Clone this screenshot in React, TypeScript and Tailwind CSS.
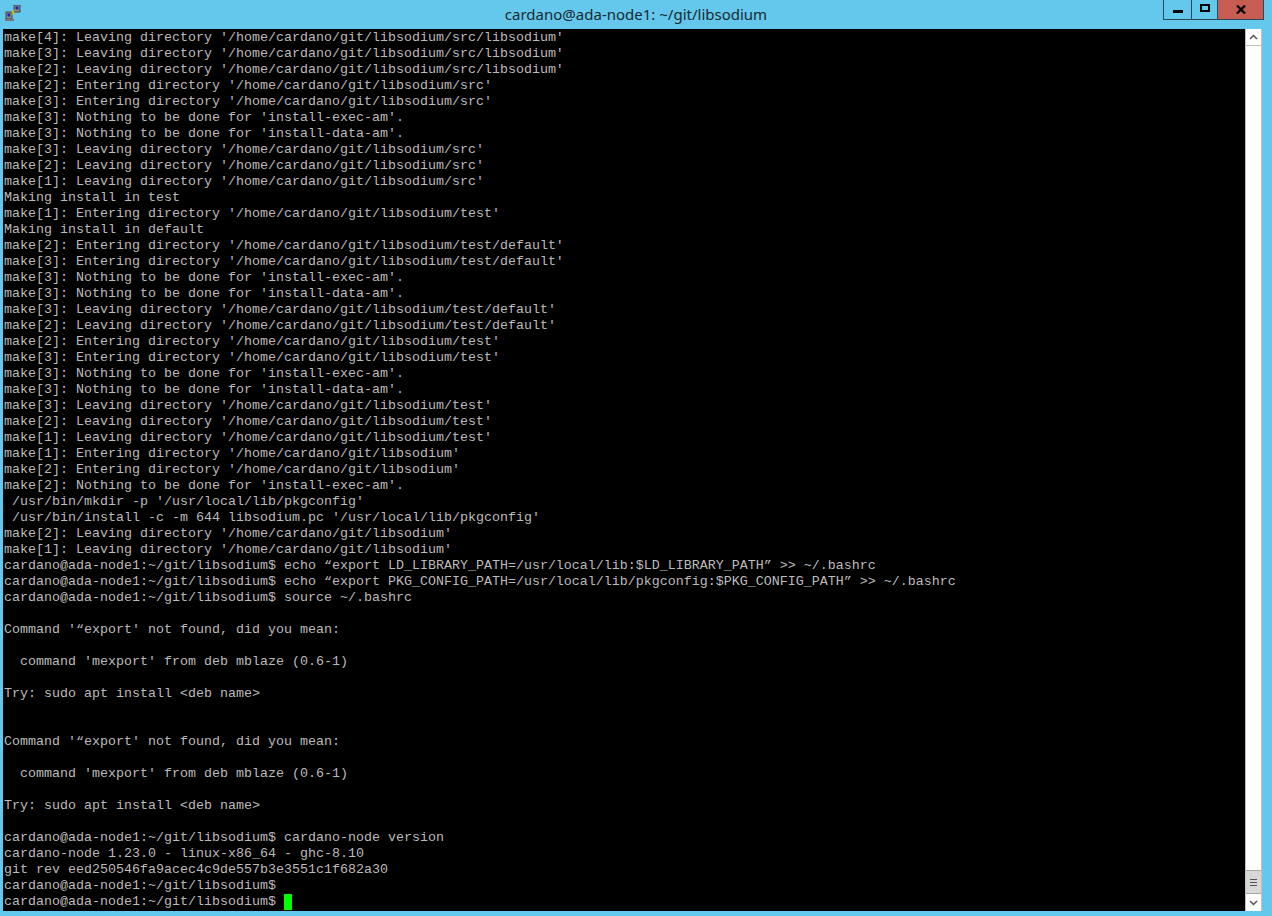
const lines = [
  "make[4]: Leaving directory '/home/cardano/git/libsodium/src/libsodium'",
  "make[3]: Leaving directory '/home/cardano/git/libsodium/src/libsodium'",
  "make[2]: Leaving directory '/home/cardano/git/libsodium/src/libsodium'",
  "make[2]: Entering directory '/home/cardano/git/libsodium/src'",
  "make[3]: Entering directory '/home/cardano/git/libsodium/src'",
  "make[3]: Nothing to be done for 'install-exec-am'.",
  "make[3]: Nothing to be done for 'install-data-am'.",
  "make[3]: Leaving directory '/home/cardano/git/libsodium/src'",
  "make[2]: Leaving directory '/home/cardano/git/libsodium/src'",
  "make[1]: Leaving directory '/home/cardano/git/libsodium/src'",
  "Making install in test",
  "make[1]: Entering directory '/home/cardano/git/libsodium/test'",
  "Making install in default",
  "make[2]: Entering directory '/home/cardano/git/libsodium/test/default'",
  "make[3]: Entering directory '/home/cardano/git/libsodium/test/default'",
  "make[3]: Nothing to be done for 'install-exec-am'.",
  "make[3]: Nothing to be done for 'install-data-am'.",
  "make[3]: Leaving directory '/home/cardano/git/libsodium/test/default'",
  "make[2]: Leaving directory '/home/cardano/git/libsodium/test/default'",
  "make[2]: Entering directory '/home/cardano/git/libsodium/test'",
  "make[3]: Entering directory '/home/cardano/git/libsodium/test'",
  "make[3]: Nothing to be done for 'install-exec-am'.",
  "make[3]: Nothing to be done for 'install-data-am'.",
  "make[3]: Leaving directory '/home/cardano/git/libsodium/test'",
  "make[2]: Leaving directory '/home/cardano/git/libsodium/test'",
  "make[1]: Leaving directory '/home/cardano/git/libsodium/test'",
  "make[1]: Entering directory '/home/cardano/git/libsodium'",
  "make[2]: Entering directory '/home/cardano/git/libsodium'",
  "make[2]: Nothing to be done for 'install-exec-am'.",
  " /usr/bin/mkdir -p '/usr/local/lib/pkgconfig'",
  " /usr/bin/install -c -m 644 libsodium.pc '/usr/local/lib/pkgconfig'",
  "make[2]: Leaving directory '/home/cardano/git/libsodium'",
  "make[1]: Leaving directory '/home/cardano/git/libsodium'",
  "cardano@ada-node1:~/git/libsodium$ echo “export LD_LIBRARY_PATH=/usr/local/lib:$LD_LIBRARY_PATH” >> ~/.bashrc",
  "cardano@ada-node1:~/git/libsodium$ echo “export PKG_CONFIG_PATH=/usr/local/lib/pkgconfig:$PKG_CONFIG_PATH” >> ~/.bashrc",
  "cardano@ada-node1:~/git/libsodium$ source ~/.bashrc",
  "",
  "Command '“export' not found, did you mean:",
  "",
  "  command 'mexport' from deb mblaze (0.6-1)",
  "",
  "Try: sudo apt install <deb name>",
  "",
  "",
  "Command '“export' not found, did you mean:",
  "",
  "  command 'mexport' from deb mblaze (0.6-1)",
  "",
  "Try: sudo apt install <deb name>",
  "",
  "cardano@ada-node1:~/git/libsodium$ cardano-node version",
  "cardano-node 1.23.0 - linux-x86_64 - ghc-8.10",
  "git rev eed250546fa9acec4c9de557b3e3551c1f682a30",
  "cardano@ada-node1:~/git/libsodium$",
];

export default function App() {
  return (
    <div className="w-[1272px] h-[916px] bg-[#63c8eb] flex flex-col overflow-hidden">
      <div className="h-[29px] shrink-0 relative flex items-start justify-center">
        <svg className="absolute left-[5px] top-[5px]" width="16" height="16" viewBox="0 0 16 16">
          <rect x="9" y="0" width="6" height="7" fill="#8a8a9a" stroke="#333" strokeWidth="0.8" />
          <rect x="10.5" y="1.5" width="3" height="3" fill="#1a2aa0" />
          <rect x="1" y="7" width="6" height="7" fill="#8a8a9a" stroke="#333" strokeWidth="0.8" />
          <rect x="2.5" y="8.5" width="3" height="3" fill="#1a2aa0" />
          <rect x="0" y="14" width="9" height="2" fill="#777" />
          <path d="M11 4 L6 7 L8 8 L5 11 L10 8 L8 7 Z" fill="#f5e020" stroke="#a08800" strokeWidth="0.3" />
        </svg>
        <span className="mt-[6px] text-[15px] leading-[17px] text-[#1a2a33] font-['Noto_Sans',sans-serif]">
          cardano@ada-node1: ~/git/libsodium
        </span>
        <div className="absolute right-[8px] top-0 flex h-[20px] border border-t-0 border-[#2a4a5a]">
          <div className="w-[28px] flex items-center justify-center border-r border-[#2a4a5a]">
            <div className="w-[10px] h-[3px] bg-black mt-[3px]" />
          </div>
          <div className="w-[25px] flex items-center justify-center">
            <div className="w-[10px] h-[8px] border-2 border-black -mt-[3px]" />
          </div>
          <div className="w-[46px] flex items-center justify-center bg-[#c75c52] border-l border-[#2a4a5a]">
            <svg width="10" height="9" viewBox="0 0 10 9" className="-mt-[1px]">
              <path d="M1 0.5 L9 8.5 M9 0.5 L1 8.5" stroke="#000" strokeWidth="2.2" />
            </svg>
          </div>
        </div>
      </div>
      <div className="flex h-[882px] pl-[3px] pr-[10px]">
        <div className="flex-1 bg-black pl-px pt-px text-[13.33px] leading-[16px] text-[#bbbbbb] font-['Liberation_Mono',monospace] whitespace-pre">
          {lines.map((line, i) => (
            <div key={i} className="h-[16px]">{line}</div>
          ))}
          <div className="h-[16px] flex">
            <span>cardano@ada-node1:~/git/libsodium$ </span>
            <span className="w-[8px] h-[16px] bg-[#00ff00]" />
          </div>
        </div>
        <div className="w-[17px] bg-white border-x border-[#c0c0c0] flex flex-col">
          <div className="h-[17px] flex items-center justify-center border-b border-[#c0c0c0]">
            <svg width="9" height="6" viewBox="0 0 9 6">
              <path d="M1 5 L4.5 1.5 L8 5" stroke="#555" strokeWidth="1.5" fill="none" />
            </svg>
          </div>
          <div className="flex-1" />
          <div className="h-[24px] bg-[#d8d8d8] border-y border-[#a8a8a8] flex flex-col items-center justify-center gap-[2px]">
            <div className="w-[7px] h-px bg-[#555]" />
            <div className="w-[7px] h-px bg-[#555]" />
            <div className="w-[7px] h-px bg-[#555]" />
          </div>
          <div className="h-[17px] flex items-center justify-center">
            <svg width="9" height="6" viewBox="0 0 9 6">
              <path d="M1 1 L4.5 4.5 L8 1" stroke="#555" strokeWidth="1.5" fill="none" />
            </svg>
          </div>
        </div>
      </div>
    </div>
  );
}
